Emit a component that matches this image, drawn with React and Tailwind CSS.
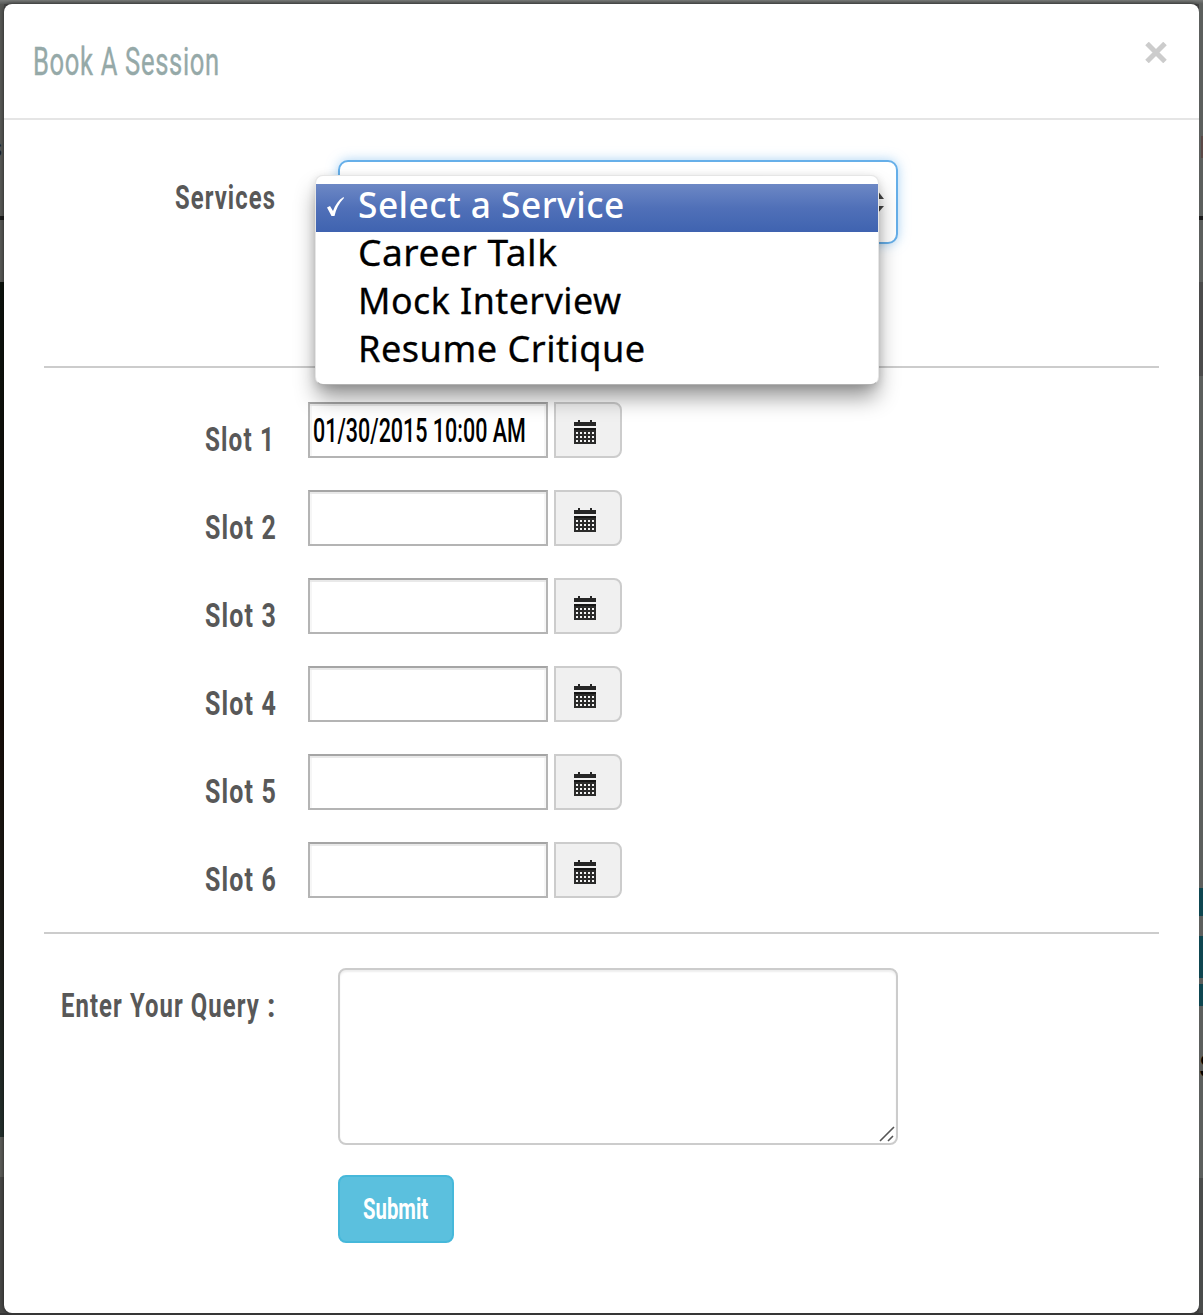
import { useLayoutEffect, useRef, useState } from "react";

// Condensed lettering: squeezes the text horizontally to the given width.
function Condensed({ width, className = "", children }) {
  const ref = useRef(null);
  const [scale, setScale] = useState(1);
  useLayoutEffect(() => {
    setScale(width / ref.current.offsetWidth);
  }, [width]);
  return (
    <span className={`block ${className}`} style={{ width }}>
      <span
        ref={ref}
        className="inline-block origin-left whitespace-pre"
        style={{ transform: `scaleX(${scale})` }}
      >
        {children}
      </span>
    </span>
  );
}

function CalendarIcon() {
  return (
    <svg width="22" height="24" viewBox="0 0 22 24" shapeRendering="crispEdges">
      <path d="M4 0h2v2h10V0h2v2h4v4H0V2h4z" fill="#262626" />
      <path d="M0 8h22v16H0z" fill="#2b2b2a" />
      <path d="M0 8h22v2H0z" fill="#161616" />
      {[12, 16, 20].map((y) =>
        [2, 6, 10, 14, 18].map((x) => (
          <rect key={`${x}-${y}`} x={x} y={y} width="2" height="2" fill="#f4f4f4" />
        ))
      )}
    </svg>
  );
}

const slots = [
  { n: 1, width: 70, value: "01/30/2015 10:00 AM" },
  { n: 2, width: 72, value: "" },
  { n: 3, width: 72, value: "" },
  { n: 4, width: 72, value: "" },
  { n: 5, width: 72, value: "" },
  { n: 6, width: 72, value: "" },
];

const services = [
  { name: "Select a Service", width: 267, selected: true },
  { name: "Career Talk", width: 200 },
  { name: "Mock Interview", width: 264 },
  { name: "Resume Critique", width: 288 },
];

const labelText = "text-[33px] leading-[56px] font-bold tracking-[1.5px] text-[#585858]";

function SlotRow({ slot }) {
  return (
    <div className="flex h-14">
      <div className="w-[304px] shrink-0 pt-2.5 pl-[201px]">
        <Condensed width={slot.width} className={labelText}>{`Slot ${slot.n}`}</Condensed>
      </div>
      <div className="h-14 w-60 border-2 border-[#b4b4b4] border-t-[#a5a5a5] bg-white pl-[3px] shadow-[inset_0_2px_0_#e9e9e9,inset_2px_0_0_#f6f6f6,inset_-2px_0_0_#f6f6f6]">
        {slot.value && (
          <Condensed width={213} className="text-[33px] leading-[53px] font-medium text-black">
            {slot.value}
          </Condensed>
        )}
      </div>
      <button className="ml-1.5 flex h-14 w-[68px] items-start rounded-r-lg border-2 border-[#cccccc] bg-[#f0f0f0] pt-4 pl-[18px]">
        <CalendarIcon />
      </button>
    </div>
  );
}

function ServiceMenu() {
  return (
    <div className="absolute top-[15px] -left-[23px] z-10 h-[210px] w-[564px] rounded-lg border border-black/10 border-b-black/30 bg-white pt-2 shadow-[0_14px_22px_-2px_rgba(0,0,0,0.42),0_2px_8px_rgba(0,0,0,0.12)]">
      {services.map((s) => (
        <div
          key={s.name}
          className={`flex h-12 ${
            s.selected
              ? "bg-linear-to-b from-[#6d88c5] via-[#5070b8] to-[#3f63b0] font-medium text-white"
              : "font-normal text-black [-webkit-text-stroke:0.3px_black]"
          }`}
        >
          <div className="w-[42px] pt-3 pl-[10px]">
            {s.selected && (
              <svg width="19" height="22" viewBox="0 0 19 22" fill="none">
                <path d="M1 11.5l3-1.5 3 5C9 9 12.500 4 17.500 1L18 2C13 7 10 13 8.500 20H5.500z" fill="white" />
              </svg>
            )}
          </div>
          <Condensed
            width={s.width}
            className="font-['Noto_Sans',sans-serif] text-[37px] leading-[40px] tracking-[0.5px]"
          >
            {s.name}
          </Condensed>
        </div>
      ))}
    </div>
  );
}

function BackdropLeft() {
  return (
    <div className="flex h-full w-1 shrink-0 flex-col bg-[#575855]">
      <div className="mt-[132px] h-6 w-1 overflow-hidden">
        <span className="-ml-3 block text-[28px] leading-6 text-[#1c1c1c]">s</span>
      </div>
      <div className="mt-[56px] h-1 bg-[#1c1c1c]" />
      <div className="mt-[62px] h-[855px] bg-linear-to-b from-[#0c130e] via-[#160d08] to-[#24302d]" />
      <div className="h-10 bg-[#5b5c58]" />
      <div className="flex-1 bg-[#484846]" />
    </div>
  );
}

function BackdropRight() {
  return (
    <div className="flex h-full w-1 shrink-0 flex-col bg-[#5c5f5d]">
      <div className="mt-[132px] ml-0.5 h-[22px] bg-[#5b4846]" />
      <div className="mt-[58px] h-1 bg-[#1c1c1c]" />
      <div className="mt-[62px] h-[94px] bg-[#4b4b4b]" />
      <div className="mt-[512px] h-7 bg-[#0e4650]" />
      <div className="mt-5 h-[42px] bg-[#0e4650]" />
      <div className="mt-1.5 h-[22px] bg-[#0e4650]" />
      <div className="mt-[46px] h-[28px] overflow-hidden">
        <span className="block text-[34px] leading-7 text-black">S</span>
      </div>
      <div className="mt-[98px] flex-1 bg-[#4a4c4b]" />
    </div>
  );
}

export default function App() {
  return (
    <div className="flex h-[1315px] w-[1203px] flex-col overflow-hidden bg-[#484848] font-[Roboto,sans-serif]">
      <div className="h-1 shrink-0 bg-linear-to-b from-[#797b79] to-[#5b5d5c]" />
      <div className="flex h-[1309px] shrink-0">
        <BackdropLeft />
        <div className="flex w-[1195px] shrink-0 flex-col rounded-lg bg-white shadow-[0_0_4px_rgba(0,0,0,0.6)]">
          <div className="flex h-[116px] shrink-0 items-start justify-between border-b-2 border-[#e5e5e5] pr-8 pl-[29px]">
            <Condensed width={187} className="pt-[30px] text-[38px] leading-[56px] font-normal tracking-[1px] text-[#95a9a8] [-webkit-text-stroke:0.4px_#95a9a8]">
              Book A Session
            </Condensed>
            <button aria-label="Close" className="mt-[38px]">
              <svg width="22" height="21" viewBox="0 0 22 21" fill="none" stroke="#cccccc" strokeWidth="5">
                <path d="M2 1.5L20 19.5M20 1.5L2 19.5" />
              </svg>
            </button>
          </div>

          <div className="flex h-[246px] shrink-0 pt-10">
            <div className="w-[334px] shrink-0 pt-2.5 pl-[171px]">
              <Condensed width={101} className={labelText}>Services</Condensed>
            </div>
            <div className="relative h-[84px] w-[560px]">
              <div className="flex h-[84px] w-[560px] items-start justify-end rounded-[10px] border-2 border-[#66afe9] bg-white pt-7 pr-3 shadow-[0_0_12px_rgba(102,175,233,0.55)]">
                <svg width="14" height="24" viewBox="0 0 14 24" fill="#444444">
                  <path d="M7 0l7 9H0zM7 24l7-8H0z" />
                </svg>
              </div>
              <ServiceMenu />
            </div>
          </div>

          <div className="mx-10 h-0.5 shrink-0 bg-[#cccccc]" />

          <div className="flex flex-col gap-8 pt-[34px]">
            {slots.map((slot) => (
              <SlotRow key={slot.n} slot={slot} />
            ))}
          </div>

          <div className="mx-10 mt-[34px] h-0.5 shrink-0 bg-[#cccccc]" />

          <div className="flex pt-[34px]">
            <div className="flex w-[334px] shrink-0 pt-2.5 pl-[57px]">
              <Condensed width={206} className={labelText}>{"Enter Your Query "}</Condensed>
              <Condensed width={10} className={labelText}>:</Condensed>
            </div>
            <div className="flex h-[177px] w-[560px] items-end justify-end rounded-lg border-2 border-[#cccccc] bg-white shadow-[inset_0_2px_2px_rgba(0,0,0,0.07)]">
              <svg width="17" height="17" viewBox="0 0 17 17" fill="none" stroke="#555555" strokeWidth="1.6">
                <path d="M1 15L15 1M9 15L14 10" />
              </svg>
            </div>
          </div>

          <div className="pt-[30px] pl-[334px]">
            <button className="flex h-[68px] w-[116px] rounded-lg border-2 border-[#46b8da] bg-[#5bc0de] pl-[23px] text-left">
              <Condensed width={65} className="text-[30px] leading-[64px] font-bold text-white">Submit</Condensed>
            </button>
          </div>
        </div>
        <BackdropRight />
      </div>
      <div className="h-0.5 shrink-0 bg-[#363636]" />
    </div>
  );
}
